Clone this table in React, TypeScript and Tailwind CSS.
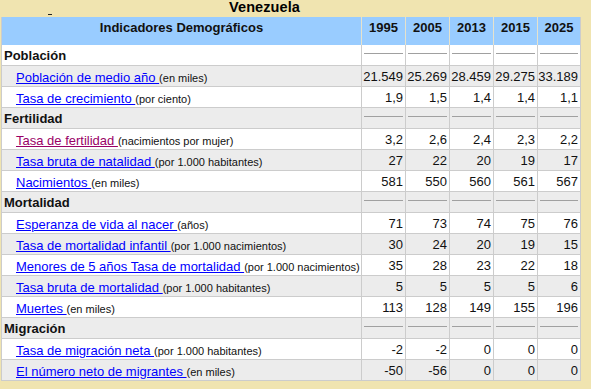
import React from "react";

type Row =
  | { type: "section"; label: string }
  | { type: "data"; label: string; note: string; vals: string[]; visited?: boolean };

const rows: Row[] = [
  { type: "section", label: "Población" },
  { type: "data", label: "Población de medio año ", note: "(en miles)", vals: ["21.549", "25.269", "28.459", "29.275", "33.189"] },
  { type: "data", label: "Tasa de crecimiento ", note: "(por ciento)", vals: ["1,9", "1,5", "1,4", "1,4", "1,1"] },
  { type: "section", label: "Fertilidad" },
  { type: "data", label: "Tasa de fertilidad ", note: "(nacimientos por mujer)", vals: ["3,2", "2,6", "2,4", "2,3", "2,2"], visited: true },
  { type: "data", label: "Tasa bruta de natalidad ", note: "(por 1.000 habitantes)", vals: ["27", "22", "20", "19", "17"] },
  { type: "data", label: "Nacimientos ", note: "(en miles)", vals: ["581", "550", "560", "561", "567"] },
  { type: "section", label: "Mortalidad" },
  { type: "data", label: "Esperanza de vida al nacer ", note: "(años)", vals: ["71", "73", "74", "75", "76"] },
  { type: "data", label: "Tasa de mortalidad infantil ", note: "(por 1.000 nacimientos)", vals: ["30", "24", "20", "19", "15"] },
  { type: "data", label: "Menores de 5 años Tasa de mortalidad ", note: "(por 1.000 nacimientos)", vals: ["35", "28", "23", "22", "18"] },
  { type: "data", label: "Tasa bruta de mortalidad ", note: "(por 1.000 habitantes)", vals: ["5", "5", "5", "5", "6"] },
  { type: "data", label: "Muertes ", note: "(en miles)", vals: ["113", "128", "149", "155", "196"] },
  { type: "section", label: "Migración" },
  { type: "data", label: "Tasa de migración neta ", note: "(por 1.000 habitantes)", vals: ["-2", "-2", "0", "0", "0"] },
  { type: "data", label: "El número neto de migrantes ", note: "(en miles)", vals: ["-50", "-56", "0", "0", "0"] },
];

const years = ["1995", "2005", "2013", "2015", "2025"];
const gridCols = "grid grid-cols-[359px_44px_44px_44px_44px_43px]";

export default function App() {
  return (
    <div
      className="w-[591px] h-[389px] bg-[#f0e4b0] text-black overflow-hidden"
      style={{ fontFamily: '"Liberation Sans", Arial, sans-serif' }}
    >
      <div className="flex h-[17px]">
        <div className="ml-[48px] mt-[14px] w-[4px] h-[1px] bg-[#222]" />
        <div className="ml-[177px] text-[14.5px] font-bold leading-[14px] pt-[0px] tracking-[0.1px]">
          Venezuela
        </div>
      </div>
      <div className="ml-[1px] w-[580px] border-l border-r border-[#cccccc]">
        <div className={`${gridCols} h-[28px] bg-[#99ccff]`}>
          <div className="text-[13px] font-bold leading-[16px] pt-[3px] text-center text-[#111]">
            Indicadores Demográficos
          </div>
          {years.map((y) => (
            <div key={y} className="border-l border-[#e6e2cc] text-[13px] font-bold leading-[16px] pt-[3px] text-center text-[#111]">
              {y}
            </div>
          ))}
        </div>
        {rows.map((r, i) => {
          const bg = i % 2 === 0 ? "bg-white" : "bg-[#ececec]";
          if (r.type === "section") {
            return (
              <div key={i} className={`${gridCols} h-[21px] border-b border-[#cccccc] ${bg}`}>
                <div className="pl-[2px] pt-[1px] text-[13px] font-bold leading-[20px] text-[#111]">{r.label}</div>
                {years.map((y) => (
                  <div key={y} className="border-l border-[#cccccc] pt-[8px] pl-[2px] pr-[2px]">
                    <div className="h-[1px] bg-[#a0a0a0]" />
                  </div>
                ))}
              </div>
            );
          }
          return (
            <div key={i} className={`${gridCols} h-[21px] border-b border-[#cccccc] ${bg}`}>
              <div className="pl-[14px] pt-[1px] leading-[20px] whitespace-nowrap overflow-hidden">
                <a
                  href="#"
                  className={`text-[13px] underline ${r.visited ? "text-[#990066]" : "text-[#0000ff]"}`}
                >
                  {r.label}
                </a>
                <span className="text-[11px] text-[#111]">{r.note}</span>
              </div>
              {r.vals.map((v, j) => (
                <div key={j} className="border-l border-[#cccccc] pt-[1px] text-right pr-[2px] text-[13px] leading-[20px] text-[#111]">
                  {v}
                </div>
              ))}
            </div>
          );
        })}
      </div>
    </div>
  );
}
